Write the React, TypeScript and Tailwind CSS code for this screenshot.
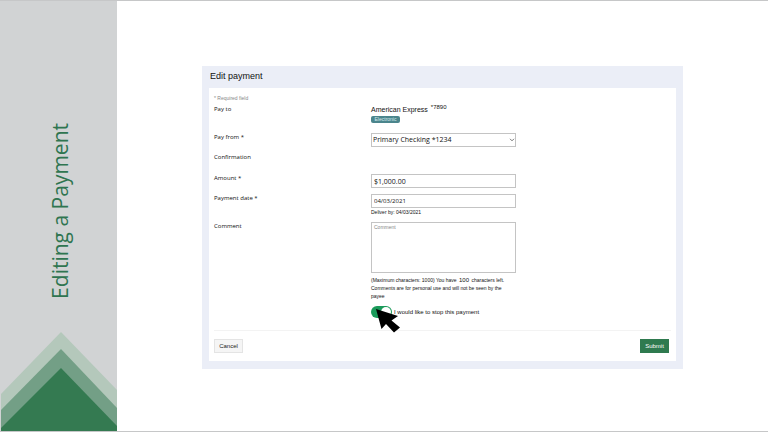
import type { ReactNode } from 'react';

const openSans = "font-['Open_Sans',sans-serif]";
const arial = "font-['Liberation_Sans',Arial,sans-serif]";

const control =
  'block w-full rounded-none border border-[#c4c4c4] bg-white text-[#111] outline-none';

const Sidebar = () => (
  <aside className="flex w-[117px] shrink-0 flex-col justify-between bg-[#d1d3d4]">
    <h1
      className={`${openSans} mt-[122px] ml-[46px] rotate-180 self-start text-[21px] leading-[28px] whitespace-nowrap text-[#2f7550] [writing-mode:vertical-rl]`}
    >
      Editing a Payment
    </h1>
    <svg viewBox="0 0 117 100" className="block w-full" aria-hidden="true">
      <path d="M1 63 61 1 117 59V100H1Z" fill="#b4c8bb" />
      <path d="M1 79 61 18 117 77V100H1Z" fill="#739f86" />
      <path d="M1 97 61 37 117 95V100H1Z" fill="#347a51" />
    </svg>
  </aside>
);

const Row = ({
  label,
  htmlFor,
  className,
  children,
}: {
  label: string;
  htmlFor?: string;
  className: string;
  children?: ReactNode;
}) => (
  <div className={`grid grid-cols-[157px_145px] ${className}`}>
    {htmlFor ? (
      <label htmlFor={htmlFor} className="leading-[8px]">
        {label}
      </label>
    ) : (
      <span className="leading-[14px]">{label}</span>
    )}
    <div>{children}</div>
  </div>
);

const Cursor = () => (
  <svg
    viewBox="0 0 25 26"
    className="pointer-events-none absolute top-[3px] left-[5px] h-[26px] w-[25px]"
    aria-hidden="true"
  >
    <path d="M0 0 22 7 15.500 11.500 24 18.500 18 23.500 10 15 5.500 20Z" fill="#000" />
  </svg>
);

const App = () => {
  return (
    <div className="flex min-h-screen border-y border-[#c6c7c8] bg-white">
      <Sidebar />
      <main className="flex-1 px-[85px] pt-[65px] pb-[62px]">
        <section className="bg-[#ebeef7] px-[7px] pb-2">
          <h2
            className={`${arial} pb-0.5 pl-px text-[9px] leading-[20px] text-[#111]`}
          >
            Edit payment
          </h2>
          <form
            className={`${openSans} bg-white px-[5px] pt-[6px] pb-2 text-[6px] text-[#111]`}
            onSubmit={(e) => e.preventDefault()}
          >
            <p className={`${arial} text-[5px] leading-[8px] text-[#888]`}>
              * Required field
            </p>

            <Row label="Pay to" className="mb-2.5">
              <p className={`${arial} flex text-[7px] leading-[15px] whitespace-nowrap`}>
                American Express
                <span className="ml-[3px] text-[6px] leading-[10px]">*7890</span>
              </p>
              <span
                className={`${arial} -mt-px block w-[29px] rounded-[2px] bg-[#4b858c] text-center text-[5px] leading-[7px] text-[#d5eaec]`}
              >
                Electronic
              </span>
            </Row>

            <Row label="Pay from *" htmlFor="from" className="mb-[3px]">
              <div className="relative">
                <select
                  id="from"
                  className={`${control} h-[14px] appearance-none pl-px text-[7px] leading-[12px]`}
                >
                  <option>Primary Checking *1234</option>
                </select>
                <svg
                  viewBox="0 0 6 4"
                  className="pointer-events-none absolute top-[5px] right-px h-1 w-1.5"
                  aria-hidden="true"
                >
                  <path d="M1 .8 3 2.800 5 .8" fill="none" stroke="#555" strokeWidth=".8" />
                </svg>
              </div>
            </Row>

            <Row label="Confirmation" className="mb-2.5" />

            <Row label="Amount *" htmlFor="amount" className="mb-1.5">
              <input
                id="amount"
                type="text"
                defaultValue="$1,000.00"
                className={`${control} h-[14px] px-[2px] text-[7px]`}
              />
            </Row>

            <Row label="Payment date *" htmlFor="date" className="mb-1.5">
              <input
                id="date"
                type="text"
                defaultValue="04/03/2021"
                className={`${control} h-[14px] px-[2px] text-[6px]`}
              />
              <p className={`${arial} text-[5px] leading-[8px]`}>
                Deliver by: 04/03/2021
              </p>
            </Row>

            <Row label="Comment" htmlFor="comment" className="mb-1.5">
              <textarea
                id="comment"
                placeholder="Comment"
                className={`${control} ${arial} h-[51px] resize-none px-[2px] text-[5px] leading-[8px] placeholder:text-[#888]`}
              />
              <p className={`${arial} mt-[3px] text-[5px] leading-[8px]`}>
                (Maximum characters: 1000) You have{' '}
                <span className="px-px text-[6px]">100</span> characters left.
                <br />
                Comments are for personal use and will not be seen by the payee
              </p>
            </Row>

            <div className="relative ml-[157px] flex items-center gap-0.5">
              <input
                id="stop"
                type="checkbox"
                role="switch"
                defaultChecked
                className="flex h-3 w-[21px] appearance-none items-center justify-start rounded-full bg-[#bbb] p-px before:size-2.5 before:rounded-full before:bg-white checked:justify-end checked:bg-[#1b9a5a]"
              />
              <label htmlFor="stop" className={`${arial} text-[6px] leading-[12px]`}>
                I would like to stop this payment
              </label>
              <Cursor />
            </div>

            <div className="mt-3 flex items-center justify-between border-t border-[#f3f3f3] pt-2">
              <button
                type="button"
                className={`${arial} h-[14px] w-[29px] border border-[#e4e4e4] bg-[#f5f5f5] text-[6px] leading-[12px] text-[#222]`}
              >
                Cancel
              </button>
              <button
                type="submit"
                className={`${arial} mr-0.5 h-[14px] w-[29px] bg-[#2f7a4f] text-[6px] leading-[14px] text-white`}
              >
                Submit
              </button>
            </div>
          </form>
        </section>
      </main>
    </div>
  );
};

export default App;
